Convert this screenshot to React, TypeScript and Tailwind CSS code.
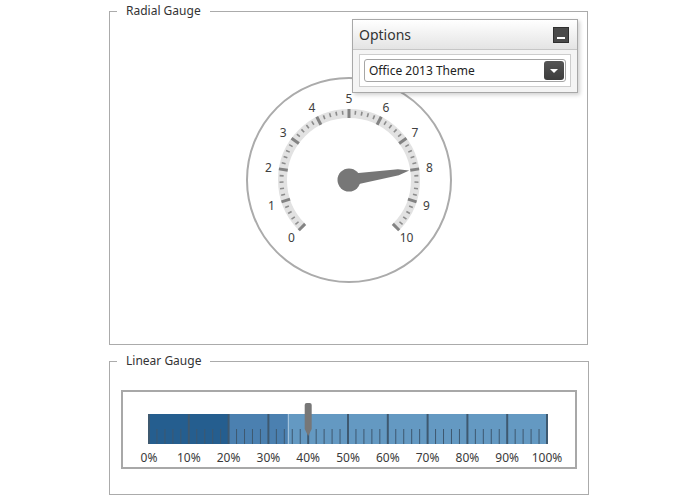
const FONT = { fontFamily: '"Segoe UI", "Noto Sans", sans-serif' };

const CX = 105;
const CY = 105;

function polar(r: number, deg: number) {
  const a = (deg * Math.PI) / 180;
  return { x: CX + r * Math.sin(a), y: CY - r * Math.cos(a) };
}

const angleOf = (v: number) => -135 + v * 27;

function RadialGauge() {
  const bandR = 66.5;
  const s = polar(bandR, -135);
  const e = polar(bandR, 135);
  const ticks = Array.from({ length: 51 }, (_, i) => i);
  const needleAngle = angleOf(8);

  return (
    <svg width={210} height={210} viewBox="0 0 210 210" className="mx-auto mt-[56px] block">
      <circle cx={CX} cy={CY} r={102} fill="none" stroke="#ababab" strokeWidth={2} />
      <path
        d={`M ${s.x} ${s.y} A ${bandR} ${bandR} 0 1 1 ${e.x} ${e.y}`}
        fill="none"
        stroke="#e2e2e2"
        strokeWidth={9}
      />
      {ticks.map((i) => {
        const major = i % 5 === 0;
        const a = angleOf(i / 5);
        const p1 = polar(major ? 62 : 65.5, a);
        const p2 = polar(major ? 71 : 69.5, a);
        return (
          <line
            key={i}
            x1={p1.x}
            y1={p1.y}
            x2={p2.x}
            y2={p2.y}
            stroke={major ? "#838383" : "#8c8c8c"}
            strokeWidth={major ? 3 : 1.6}
          />
        );
      })}
      {Array.from({ length: 11 }, (_, v) => {
        const p = polar(81.5, angleOf(v));
        return (
          <text
            key={v}
            x={p.x}
            y={p.y}
            textAnchor="middle"
            dominantBaseline="central"
            fontSize={12}
            fill="#404040"
            style={FONT}
          >
            {v}
          </text>
        );
      })}
      <g transform={`rotate(${needleAngle - 90} ${CX} ${CY})`}>
        <polygon
          points={`${CX},${CY - 6} ${CX + 50},${CY - 3} ${CX + 61},${CY} ${CX + 50},${CY + 3} ${CX},${CY + 6}`}
          fill="#777777"
        />
      </g>
      <circle cx={CX} cy={CY} r={11.5} fill="#777777" />
    </svg>
  );
}

function LinearGauge() {
  const x0 = 26;
  const w = 398;
  const top = 22;
  const bottom = 52;
  const px = (pct: number) => x0 + (w * pct) / 100;
  const pointer = px(40);

  return (
    <div className="mx-[11px] mt-[21px] h-[79px] w-[456px] border-2 border-[#a8a8a8] bg-white">
      <svg width={452} height={75} viewBox="0 0 452 75" className="block">
        <rect x={px(0)} y={top} width={px(20) - px(0)} height={bottom - top} fill="#255e8f" />
        <rect x={px(20)} y={top} width={px(35) - px(20)} height={bottom - top} fill="#4b80b0" />
        <rect x={px(35)} y={top} width={px(100) - px(35)} height={bottom - top} fill="#6499c2" />
        <line x1={px(35)} y1={top} x2={px(35)} y2={bottom} stroke="#a9c8e2" strokeWidth={1} />
        {Array.from({ length: 51 }, (_, i) => {
          const pct = i * 2;
          const major = i % 5 === 0;
          const x = px(pct);
          return (
            <line
              key={i}
              x1={x}
              y1={major ? top : 37}
              x2={x}
              y2={bottom}
              stroke="#3e5970"
              strokeWidth={major ? 2 : 1}
            />
          );
        })}
        <path
          d={`M ${pointer - 3.5} 13 Q ${pointer - 3.5} 11 ${pointer - 1.5} 11 L ${pointer + 1.5} 11 Q ${pointer + 3.5} 11 ${pointer + 3.5} 13 L ${pointer + 3.5} 37 L ${pointer} 44 L ${pointer - 3.5} 37 Z`}
          fill="#777777"
        />
        {Array.from({ length: 11 }, (_, i) => (
          <text
            key={i}
            x={px(i * 10)}
            y={69.5}
            textAnchor="middle"
            fontSize={12}
            fill="#3a3a3a"
            style={FONT}
          >
            {i * 10}%
          </text>
        ))}
      </svg>
    </div>
  );
}

function OptionsPanel() {
  return (
    <div className="absolute left-[352px] top-[19px] w-[226px] border border-[#a8a8a8] bg-[#f4f4f4] shadow-[2px_2px_4px_rgba(0,0,0,0.18)]">
      <div className="flex h-[30px] items-center justify-between border-b border-[#c6c6c6] bg-gradient-to-b from-white to-[#e4e4e4] pl-[6px] pr-[8px]">
        <span className="text-[14px] text-[#333]">Options</span>
        <div className="flex h-[16px] w-[16px] items-end justify-center border border-[#2f2f2f] bg-[#4a4a4a] pb-[3px]">
          <div className="h-[2px] w-[8px] bg-white" />
        </div>
      </div>
      <div className="px-[6px] pb-[5px] pt-[4px]">
        <div className="border border-[#cdcdcd] bg-white p-[4px]">
          <div className="flex h-[23px] items-center justify-between rounded-[3px] border border-[#a6a6a6] bg-white pl-[4px] pr-[1px]">
            <span className="text-[12px] text-[#222]">Office 2013 Theme</span>
            <div className="flex h-[19px] w-[20px] items-center justify-center rounded-[3px] bg-gradient-to-b from-[#555] to-[#3c3c3c]">
              <div className="h-0 w-0 border-x-[4px] border-t-[4px] border-x-transparent border-t-white" />
            </div>
          </div>
        </div>
      </div>
    </div>
  );
}

export default function App() {
  return (
    <div className="relative h-[500px] w-[700px] bg-white" style={FONT}>
      <div className="ml-[109px] flex w-[479px] flex-col gap-[8px] pt-[3px]">
        <fieldset className="h-[342px] border border-[#ababab]">
          <legend className="ml-[7px] px-[9px] text-[12px] leading-[16px] text-[#333]">Radial Gauge</legend>
          <RadialGauge />
        </fieldset>
        <fieldset className="h-[142px] border border-[#ababab]">
          <legend className="ml-[7px] px-[9px] text-[12px] leading-[16px] text-[#333]">Linear Gauge</legend>
          <LinearGauge />
        </fieldset>
      </div>
      <OptionsPanel />
    </div>
  );
}
